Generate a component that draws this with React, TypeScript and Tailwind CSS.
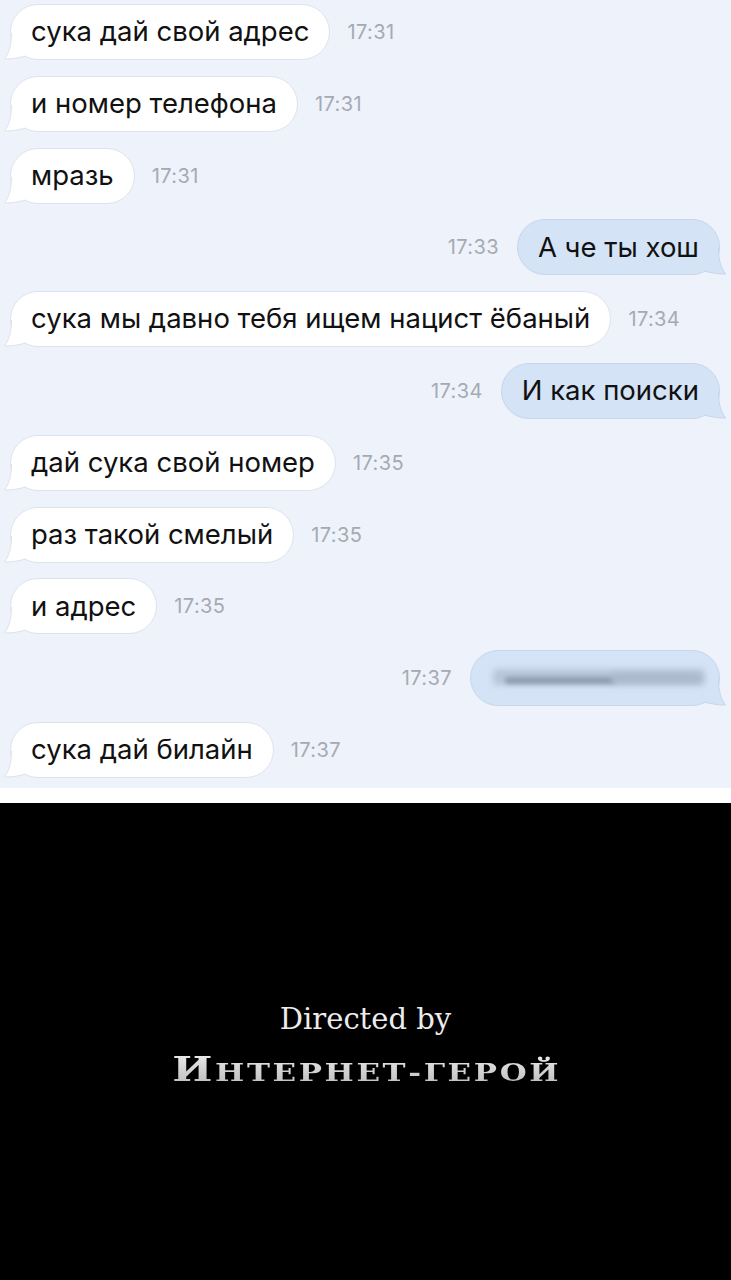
import React from 'react';

type Msg = { text: string; time: string; out?: boolean; hidden?: boolean };

const messages: Msg[] = [
  { text: 'сука дай свой адрес', time: '17:31' },
  { text: 'и номер телефона', time: '17:31' },
  { text: 'мразь', time: '17:31' },
  { text: 'А че ты хош', time: '17:33', out: true },
  { text: 'сука мы давно тебя ищем нацист ёбаный', time: '17:34' },
  { text: 'И как поиски', time: '17:34', out: true },
  { text: 'дай сука свой номер', time: '17:35' },
  { text: 'раз такой смелый', time: '17:35' },
  { text: 'и адрес', time: '17:35' },
  { text: '', time: '17:37', out: true, hidden: true },
  { text: 'сука дай билайн', time: '17:37' },
];

// bubble tail, drawn for the left side and mirrored for outgoing
const Tail = ({ out }: { out?: boolean }) => {
  const fill = out ? '#d5e3f6' : '#ffffff';
  const line = out ? '#c6d6ec' : '#dde3ec';
  return (
    <svg
      className={out ? 'absolute -right-[8px] -bottom-[1px]' : 'absolute -left-[8px] -bottom-[1px]'}
      width="32"
      height="27"
      viewBox="0 0 32 27"
      style={out ? { transform: 'scaleX(-1)' } : undefined}
    >
      <path d="M8.5 0 C8.5 12 6 20 1.5 26 C9 26.3 17 24.5 23 23 L32 21 L32 0 Z" fill={fill} />
      <path d="M8.5 0 C8.5 12 6 20 1.5 26 C9 26.3 17 24.5 23 23" fill="none" stroke={line} strokeWidth="1" />
    </svg>
  );
};

const Bubble = ({ m }: { m: Msg }) => {
  const time = <span className="text-[20px] text-[#a5aab2] tracking-[0.4px]">{m.time}</span>;
  const bubble = (
    <div
      className={
        'relative h-[56px] flex items-center rounded-[28px] px-[20px] ' +
        (m.out ? 'bg-[#d5e3f6] border border-[#c6d6ec]' : 'bg-white border border-[#dde3ec]')
      }
    >
      <Tail out={m.out} />
      {m.hidden ? (
        <div className="relative w-[208px] h-[20px]">
          <div className="absolute left-[2px] top-[1px] w-[212px] h-[16px] bg-[#b7c5d8] blur-[3px] rounded" />
          <div className="absolute left-[14px] top-[9px] w-[110px] h-[7px] bg-[#8f9eb2] blur-[2px] rounded" />
          <div className="absolute left-[120px] top-[6px] w-[90px] h-[9px] bg-[#a9b8cb] blur-[3px] rounded" />
        </div>
      ) : (
        <span className="relative text-[27.5px] text-[#111111] leading-none whitespace-nowrap">{m.text}</span>
      )}
    </div>
  );
  return m.out ? (
    <div className="h-[56px] flex items-center justify-end gap-[18px] pr-[11px]">
      {time}
      {bubble}
    </div>
  ) : (
    <div className="h-[56px] flex items-center gap-[17px] pl-[10px]">
      {bubble}
      {time}
    </div>
  );
};

export default function App() {
  return (
    <div className="w-[731px] h-[1280px] flex flex-col bg-black" style={{ fontFamily: 'Inter, "Liberation Sans", sans-serif' }}>
      <div className="h-[788px] bg-[#edf2fb] pt-[4px] flex flex-col gap-[15.8px]">
        {messages.map((m, i) => (
          <Bubble key={i} m={m} />
        ))}
      </div>
      <div className="h-[15px] bg-white" />
      <div className="flex-1 bg-black flex flex-col items-center pt-[202px]" style={{ fontFamily: '"DejaVu Serif", "Liberation Serif", serif' }}>
        <div className="text-[29px] text-[#ececec] leading-none">Directed by</div>
        <div className="mt-[19px] ml-[2px] font-bold leading-none tracking-[2px] scale-x-[1.29] whitespace-nowrap bg-linear-to-b from-[#ececec] to-[#bcbcbc] bg-clip-text text-transparent">
          <span className="text-[33px]">И</span>
          <span className="text-[24px]">НТЕРНЕТ-ГЕРОЙ</span>
        </div>
      </div>
    </div>
  );
}
